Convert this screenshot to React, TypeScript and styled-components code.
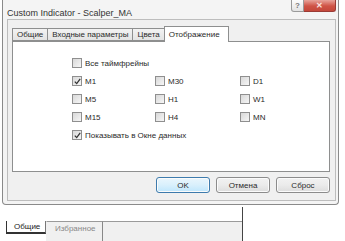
import React from "react";
import styled, { createGlobalStyle } from "styled-components";

const Global = createGlobalStyle`
  html, body { margin: 0; padding: 0; background: #ffffff; }
  body { width: 345px; height: 241px; overflow: hidden; font-family: "Liberation Sans", Arial, sans-serif; font-size: 8px; color: #2a2a2a; }
`;

const Page = styled.div`
  width: 345px;
  height: 241px;
  display: flex;
  flex-direction: column;
`;

const Window = styled.div`
  margin-left: 2px;
  width: 335px;
  height: 204px;
  border: 1px solid #8a8a8a;
  border-top: none;
  border-radius: 0 0 4px 4px;
  background: #f4f4f4;
  display: flex;
  flex-direction: column;
`;

const TitleBar = styled.div`
  height: 19px;
  display: flex;
  align-items: flex-start;
  padding-left: 4px;
`;

const Title = styled.div`
  padding-top: 8px;
  line-height: 11px;
  font-size: 9px;
  color: #333;
`;

const Caption = styled.div`
  margin-left: auto;
  margin-right: 2px;
  display: flex;
  height: 13px;
`;

const CapButton = styled.div<{ $close?: boolean }>`
  width: ${(p) => (p.$close ? 32 : 13)}px;
  height: 12px;
  box-sizing: border-box;
  border: 1px solid ${(p) => (p.$close ? "#9a3b35" : "#9a9a9a")};
  border-top: none;
  border-left: ${(p) => (p.$close ? "none" : "1px solid #9a9a9a")};
  border-radius: 0 0 ${(p) => (p.$close ? "3px 0" : "0 3px")};
  background: ${(p) =>
    p.$close
      ? "linear-gradient(#e8a49b, #cf5345 55%, #c4483b)"
      : "linear-gradient(#fdfdfd, #e3e3e3)"};
  display: flex;
  align-items: center;
  justify-content: center;
  font-size: 8px;
  font-weight: bold;
  color: ${(p) => (p.$close ? "#fbe4e0" : "#777")};
`;

const Client = styled.div`
  margin: 0 2px 3px 4px;
  flex: 1;
  border: 1px solid #bdbdbd;
  background: #f0f0f0;
  display: flex;
  flex-direction: column;
  padding: 7px 5px 6px 4px;
`;

const TabRow = styled.div`
  display: flex;
  align-items: flex-end;
  height: 14px;
  position: relative;
  z-index: 1;
`;

const Tab = styled.div<{ $active?: boolean }>`
  height: ${(p) => (p.$active ? 16 : 13)}px;
  margin-bottom: ${(p) => (p.$active ? -1 : 0)}px;
  padding: ${(p) => (p.$active ? "3px 8px 0 4px" : "0 4px")};
  border: 1px solid #8e8f8f;
  border-bottom: ${(p) => (p.$active ? "none" : "1px solid #8e8f8f")};
  margin-left: -1px;
  background: ${(p) => (p.$active ? "#ffffff" : "linear-gradient(#f3f3f3, #e3e3e3)")};
  display: flex;
  align-items: ${(p) => (p.$active ? "flex-start" : "center")};
  box-sizing: border-box;
  font-size: 8px;
  color: #2a2a2a;
  white-space: nowrap;
  &:first-child { margin-left: 0; }
`;

const Panel = styled.div`
  height: 131px;
  border: 1px solid #8e8f8f;
  background: #ffffff;
  padding: 12px 0 0 59px;
  box-sizing: border-box;
  display: grid;
  grid-template-columns: 83px 85px 1fr;
  grid-auto-rows: 18px;
`;

const Option = styled.label<{ $wide?: boolean }>`
  display: flex;
  align-items: center;
  gap: 3px;
  font-size: 8px;
  color: #2a2a2a;
  white-space: nowrap;
  grid-column: ${(p) => (p.$wide ? "1 / -1" : "auto")};
`;

const Box = styled.span`
  width: 8px;
  height: 8px;
  border: 1px solid #8f8f8f;
  background: linear-gradient(135deg, #d8d8d8, #f6f6f6);
  display: flex;
  align-items: center;
  justify-content: center;
  flex: none;
`;

const ButtonRow = styled.div`
  display: flex;
  justify-content: flex-end;
  gap: 6px;
  margin-top: 5px;
`;

const Button = styled.div<{ $default?: boolean }>`
  width: 54px;
  height: 16px;
  box-sizing: border-box;
  border: 1px solid ${(p) => (p.$default ? "#3d7bad" : "#8c8c8c")};
  border-radius: 3px;
  background: ${(p) =>
    p.$default
      ? "linear-gradient(#eaf6fd, #d9f0fc 50%, #bee6fd)"
      : "linear-gradient(#f2f2f2, #ebebeb 50%, #dcdcdc)"};
  box-shadow: inset 0 0 0 1px #fbfbfb;
  display: flex;
  align-items: center;
  justify-content: center;
  font-size: 8px;
  color: #2a2a2a;
`;

const Lower = styled.div`
  height: 36px;
  display: flex;
`;

const LowerPane = styled.div`
  width: 242px;
  margin-top: 2px;
  border-right: 1px solid #444;
  display: flex;
  flex-direction: column;
  justify-content: flex-end;
`;

const BottomStrip = styled.div`
  height: 20px;
  display: flex;
  padding-left: 6px;
`;

const BottomTab = styled.div<{ $active?: boolean }>`
  width: ${(p) => (p.$active ? 40 : 57)}px;
  box-sizing: border-box;
  height: ${(p) => (p.$active ? 13 : 20)}px;
  background: ${(p) => (p.$active ? "#ffffff" : "#f0f0f0")};
  border-left: 1px solid ${(p) => (p.$active ? "#333" : "#f0f0f0")};
  border-bottom: ${(p) => (p.$active ? "2px solid #333" : "none")};
  border-top: ${(p) => (p.$active ? "none" : "1px solid #9a9a9a")};
  border-right: 1px solid ${(p) => (p.$active ? "#777" : "#888")};
  display: flex;
  align-items: ${(p) => (p.$active ? "flex-end" : "flex-start")};
  padding: ${(p) => (p.$active ? "0 0 1px 7px" : "2px 0 0 8px")};
  font-size: 8px;
  color: ${(p) => (p.$active ? "#222" : "#888")};
`;

const StripFill = styled.div`
  flex: 1;
  height: 20px;
  box-sizing: border-box;
  background: #f0f0f0;
  border-top: 1px solid #9a9a9a;
`;

const Check = () => (
  <svg width="7" height="7" viewBox="0 0 7 7">
    <path d="M0.8 3.6 L2.7 5.6 L6.2 0.9" fill="none" stroke="#333" strokeWidth="1.3" />
  </svg>
);

const Cb: React.FC<{ label: string; checked?: boolean; wide?: boolean }> = ({ label, checked, wide }) => (
  <Option $wide={wide}>
    <Box>{checked ? <Check /> : null}</Box>
    {label}
  </Option>
);

export default function App() {
  return (
    <Page>
      <Global />
      <Window>
        <TitleBar>
          <Title>Custom Indicator - Scalper_MA</Title>
          <Caption>
            <CapButton>?</CapButton>
            <CapButton $close>✕</CapButton>
          </Caption>
        </TitleBar>
        <Client>
          <TabRow>
            <Tab>Общие</Tab>
            <Tab>Входные параметры</Tab>
            <Tab>Цвета</Tab>
            <Tab $active>Отображение</Tab>
          </TabRow>
          <Panel>
            <Cb label="Все таймфрейны" wide />
            <Cb label="M1" checked />
            <Cb label="M30" />
            <Cb label="D1" />
            <Cb label="M5" />
            <Cb label="H1" />
            <Cb label="W1" />
            <Cb label="M15" />
            <Cb label="H4" />
            <Cb label="MN" />
            <Cb label="Показывать в Окне данных" checked wide />
          </Panel>
          <ButtonRow>
            <Button $default>OK</Button>
            <Button>Отмена</Button>
            <Button>Сброс</Button>
          </ButtonRow>
        </Client>
      </Window>
      <Lower>
        <LowerPane>
          <BottomStrip>
            <BottomTab $active>Общие</BottomTab>
            <BottomTab>Избранное</BottomTab>
            <StripFill />
          </BottomStrip>
        </LowerPane>
      </Lower>
    </Page>
  );
}
